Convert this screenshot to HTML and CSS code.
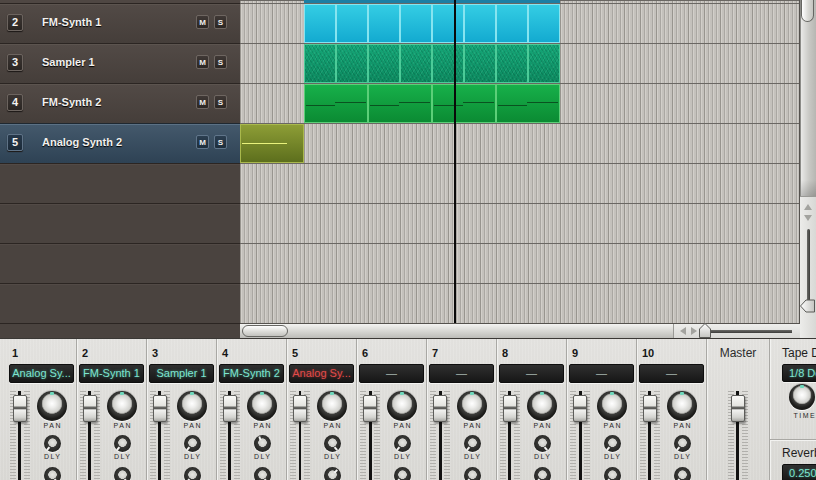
FILE: index.html
```html
<!DOCTYPE html>
<html lang="en">
  <head>
    <meta charset="UTF-8">
    <title>Song</title>
    <link rel="stylesheet" href="styles.css">
  </head>
  <body>
    <div class="arrange">
      <div class="tracks">
        <div class="track-stub"></div>
        <div class="track"><span class="num">2</span><span class="name">FM-Synth 1</span><span class="btn">M</span><span class="btn">S</span></div>
        <div class="track"><span class="num">3</span><span class="name">Sampler 1</span><span class="btn">M</span><span class="btn">S</span></div>
        <div class="track"><span class="num">4</span><span class="name">FM-Synth 2</span><span class="btn">M</span><span class="btn">S</span></div>
        <div class="track selected"><span class="num">5</span><span class="name">Analog Synth 2</span><span class="btn">M</span><span class="btn">S</span></div>
        <div class="track empty"></div>
        <div class="track empty"></div>
        <div class="track empty"></div>
        <div class="track empty"></div>
      </div>
      <div class="tracks-foot"></div>

      <div class="timeline">
        <div class="lane-stub"><div class="stub-clip"></div></div>
        <div class="lane offset">
          <div class="seg cyan"></div><div class="seg cyan"></div><div class="seg cyan"></div><div class="seg cyan"></div>
          <div class="seg cyan"></div><div class="seg cyan"></div><div class="seg cyan"></div><div class="seg cyan"></div>
        </div>
        <div class="lane offset">
          <div class="seg teal"></div><div class="seg teal"></div><div class="seg teal"></div><div class="seg teal"></div>
          <div class="seg teal"></div><div class="seg teal"></div><div class="seg teal"></div><div class="seg teal"></div>
        </div>
        <div class="lane offset">
          <div class="seg wide green"></div><div class="seg wide green"></div>
          <div class="seg wide green"></div><div class="seg wide green"></div>
        </div>
        <div class="lane">
          <div class="seg wide olive"></div>
        </div>
        <div class="lane"></div>
        <div class="lane"></div>
        <div class="lane"></div>
        <div class="lane"></div>
        <div class="playhead"></div>
      </div>

      <div class="hscroll">
        <div class="hs-track"><div class="hs-thumb"></div></div>
        <div class="hs-zoom">
          <span class="arr-left"></span>
          <span class="arr-right"></span>
          <div class="hz-slider">
            <svg class="hz-thumb" width="12" height="15" viewBox="0 0 12 15">
              <defs>
                <linearGradient id="tg" x1="0" y1="0" x2="0" y2="1">
                  <stop offset="0" stop-color="#ffffff"/>
                  <stop offset="1" stop-color="#c4c4c0"/>
                </linearGradient>
              </defs>
              <polygon points="6,0.5 11.5,6 11.5,14.5 0.5,14.5 0.5,6" fill="url(#tg)" stroke="#5a5a57"/>
            </svg>
          </div>
        </div>
      </div>

      <div class="vscroll">
        <div class="vs-track"><div class="vs-thumb"></div></div>
        <div class="vs-zoom">
          <span class="arr-up"></span>
          <span class="arr-down"></span>
          <div class="vz-track"></div>
          <svg class="vz-thumb" width="15" height="14" viewBox="0 0 15 14">
            <defs>
              <linearGradient id="vg" x1="0" y1="0" x2="1" y2="0">
                <stop offset="0" stop-color="#ffffff"/>
                <stop offset="1" stop-color="#c4c4c0"/>
              </linearGradient>
            </defs>
            <polygon points="0.5,7 6,1 14.5,1 14.5,13 6,13" fill="url(#vg)" stroke="#5a5a57"/>
          </svg>
        </div>
      </div>
    </div>

    <div class="mixer">
      <div class="strip">
        <div class="ch-num">1</div>
        <div class="display">Analog Sy...</div>
        <div class="controls">
          <div class="fader"><div class="fader-cap"></div></div>
          <div class="knobs">
            <div class="knob"></div><div class="knob-label">PAN</div>
            <div class="knob-sm" style="--a:-140deg"></div><div class="knob-label">DLY</div>
            <div class="knob-sm" style="--a:140deg"></div>
          </div>
        </div>
      </div>
      <div class="strip">
        <div class="ch-num">2</div>
        <div class="display">FM-Synth 1</div>
        <div class="controls">
          <div class="fader"><div class="fader-cap"></div></div>
          <div class="knobs">
            <div class="knob"></div><div class="knob-label">PAN</div>
            <div class="knob-sm" style="--a:-140deg"></div><div class="knob-label">DLY</div>
            <div class="knob-sm" style="--a:140deg"></div>
          </div>
        </div>
      </div>
      <div class="strip">
        <div class="ch-num">3</div>
        <div class="display">Sampler 1</div>
        <div class="controls">
          <div class="fader"><div class="fader-cap"></div></div>
          <div class="knobs">
            <div class="knob"></div><div class="knob-label">PAN</div>
            <div class="knob-sm" style="--a:-140deg"></div><div class="knob-label">DLY</div>
            <div class="knob-sm" style="--a:-140deg"></div>
          </div>
        </div>
      </div>
      <div class="strip">
        <div class="ch-num">4</div>
        <div class="display">FM-Synth 2</div>
        <div class="controls">
          <div class="fader"><div class="fader-cap"></div></div>
          <div class="knobs">
            <div class="knob"></div><div class="knob-label">PAN</div>
            <div class="knob-sm" style="--a:-20deg"></div><div class="knob-label">DLY</div>
            <div class="knob-sm" style="--a:140deg"></div>
          </div>
        </div>
      </div>
      <div class="strip">
        <div class="ch-num">5</div>
        <div class="display red">Analog Sy...</div>
        <div class="controls">
          <div class="fader"><div class="fader-cap"></div></div>
          <div class="knobs">
            <div class="knob"></div><div class="knob-label">PAN</div>
            <div class="knob-sm" style="--a:140deg"></div><div class="knob-label">DLY</div>
            <div class="knob-sm" style="--a:40deg"></div>
          </div>
        </div>
      </div>
      <div class="strip">
        <div class="ch-num">6</div>
        <div class="display empty">—</div>
        <div class="controls">
          <div class="fader"><div class="fader-cap"></div></div>
          <div class="knobs">
            <div class="knob"></div><div class="knob-label">PAN</div>
            <div class="knob-sm" style="--a:-140deg"></div><div class="knob-label">DLY</div>
            <div class="knob-sm" style="--a:-140deg"></div>
          </div>
        </div>
      </div>
      <div class="strip">
        <div class="ch-num">7</div>
        <div class="display empty">—</div>
        <div class="controls">
          <div class="fader"><div class="fader-cap"></div></div>
          <div class="knobs">
            <div class="knob"></div><div class="knob-label">PAN</div>
            <div class="knob-sm" style="--a:-140deg"></div><div class="knob-label">DLY</div>
            <div class="knob-sm" style="--a:-140deg"></div>
          </div>
        </div>
      </div>
      <div class="strip">
        <div class="ch-num">8</div>
        <div class="display empty">—</div>
        <div class="controls">
          <div class="fader"><div class="fader-cap"></div></div>
          <div class="knobs">
            <div class="knob"></div><div class="knob-label">PAN</div>
            <div class="knob-sm" style="--a:140deg"></div><div class="knob-label">DLY</div>
            <div class="knob-sm" style="--a:-140deg"></div>
          </div>
        </div>
      </div>
      <div class="strip">
        <div class="ch-num">9</div>
        <div class="display empty">—</div>
        <div class="controls">
          <div class="fader"><div class="fader-cap"></div></div>
          <div class="knobs">
            <div class="knob"></div><div class="knob-label">PAN</div>
            <div class="knob-sm" style="--a:-140deg"></div><div class="knob-label">DLY</div>
            <div class="knob-sm" style="--a:-140deg"></div>
          </div>
        </div>
      </div>
      <div class="strip">
        <div class="ch-num">10</div>
        <div class="display empty">—</div>
        <div class="controls">
          <div class="fader"><div class="fader-cap"></div></div>
          <div class="knobs">
            <div class="knob"></div><div class="knob-label">PAN</div>
            <div class="knob-sm" style="--a:-140deg"></div><div class="knob-label">DLY</div>
            <div class="knob-sm" style="--a:-140deg"></div>
          </div>
        </div>
      </div>
      <div class="strip master">
        <div class="master-label">Master</div>
        <div class="fader"><div class="fader-cap"></div></div>
      </div>
      <div class="fx">
        <div class="fx-tape">
          <div class="fx-title">Tape Delay</div>
          <div class="display fx-display">1/8 Dotted</div>
          <div class="knob fx-knob"></div>
          <div class="knob-label fx-label">TIME</div>
        </div>
        <div class="fx-reverb">
          <div class="fx-title">Reverb</div>
          <div class="display fx-display">0.250</div>
        </div>
      </div>
    </div>
  </body>
</html>
```

FILE: styles.css
```css
      html, body {
        margin: 0;
        padding: 0;
      }
      body {
        width: 816px;
        height: 480px;
        overflow: hidden;
        font-family: "Liberation Sans", Arial, sans-serif;
        background-color: #dcdbd7;
      }
      .arrange {
        display: grid;
        grid-template-columns: 240px 560px 16px;
        grid-template-rows: 323px 15px;
        height: 338px;
      }
/* track list */
      .tracks {
        grid-column: 1;
        grid-row: 1;
        display: flex;
        flex-direction: column;
        background-color: #4a433f;
      }
      .track-stub {
        height: 3px;
        flex: none;
        background-color: #4f4743;
      }
      .track {
        height: 40px;
        flex: none;
        box-sizing: border-box;
        display: flex;
        align-items: center;
        padding: 0 13px 3px 7px;
        border-top: 1px solid #2b2522;
        box-shadow: inset 0 1px 0 #5c544f;
        background: linear-gradient(#524a46, #453e3a);
      }
      .track.empty {
        background: #4a433f;
        box-shadow: inset 0 1px 0 #524a46;
      }
      .track.selected {
        border-top-color: #1f2830;
        box-shadow: inset 0 1px 0 #5b7185;
        background: linear-gradient(#44596c, #2e4254);
      }
      .num {
        width: 16px;
        height: 17px;
        box-sizing: border-box;
        display: flex;
        align-items: center;
        justify-content: center;
        border: 1px solid #6c645f;
        border-radius: 2px;
        background: linear-gradient(#3b3532, #2a2522);
        box-shadow: 0 1px 1px #1c1816;
        color: #f4f2f0;
        font-size: 11px;
        font-weight: bold;
      }
      .selected .num {
        border-color: #5f7387;
        background: linear-gradient(#26384a, #1b2a38);
      }
      .name {
        flex: 1;
        margin-left: 19px;
        color: #f2f0ee;
        font-size: 11px;
        font-weight: bold;
        text-shadow: 0 1px 1px #000;
        white-space: nowrap;
      }
      .btn {
        width: 13px;
        height: 14px;
        margin-left: 5px;
        box-sizing: border-box;
        display: flex;
        align-items: center;
        justify-content: center;
        border: 1px solid #6e6661;
        border-radius: 2px;
        background: linear-gradient(#3f3835, #2c2724);
        color: #f0eeec;
        font-size: 8px;
        font-weight: bold;
      }
      .selected .btn {
        border-color: #60758a;
        background: linear-gradient(#2b3e50, #1e2e3c);
      }
      .tracks-foot {
        grid-column: 1;
        grid-row: 2;
        background-color: #4a433f;
        border-top: 1px solid #2b2522;
      }
/* arrangement grid */
      .timeline {
        grid-column: 2;
        grid-row: 1;
        position: relative;
        overflow: hidden;
        box-sizing: border-box;
        border-right: 1px solid #55524e;
        display: flex;
        flex-direction: column;
        background-color: #c4c1bc;
        background-image:
          repeating-linear-gradient(to bottom, #6a6763 0 1px, transparent 1px 40px),
          repeating-linear-gradient(to right, #98958f 0 1px, transparent 1px 16px),
          repeating-linear-gradient(to right, #aaa7a2 0 1px, #d2cfca 1px 2px, transparent 2px 4px);
        background-position: 0 3px, 0 0, 0 0;
      }
      .lane-stub {
        height: 3px;
        flex: none;
        padding-left: 64px;
        display: flex;
      }
      .stub-clip {
        width: 256px;
        background-color: #1c7fa4;
      }
      .lane {
        height: 40px;
        flex: none;
        box-sizing: border-box;
        padding-top: 1px;
        display: flex;
      }
      .lane.offset {
        padding-left: 64px;
      }
      .seg {
        flex: none;
        width: 32px;
        box-sizing: border-box;
        border: 1px solid;
        position: relative;
      }
      .seg.wide {
        width: 64px;
      }
      .cyan {
        border-color: #86e4f0;
        background: linear-gradient(#34cde4, #13aad0);
      }
      .teal {
        border-color: #4ccb98;
        background:
          repeating-linear-gradient(60deg, rgba(0, 60, 40, 0.18) 0 1px, transparent 1px 3px),
          repeating-linear-gradient(-60deg, rgba(120, 230, 190, 0.12) 0 1px, transparent 1px 4px),
          linear-gradient(#15a677, #0c895f);
      }
      .green {
        border-color: #5ccf78;
        background: linear-gradient(#17b04a, #0b8b33);
      }
      .green::before,
      .green::after {
        content: "";
        position: absolute;
        height: 1px;
        background-color: #0a5220;
      }
      .green::before {
        left: 1px;
        width: 29px;
        top: 20px;
      }
      .green::after {
        left: 30px;
        width: 31px;
        top: 17px;
      }
      .olive {
        border-color: #a9b84c;
        background: linear-gradient(#8d9d36, #5d6f1d);
      }
      .olive::before {
        content: "";
        position: absolute;
        left: 1px;
        top: 18px;
        width: 45px;
        height: 1px;
        background-color: #e9f27c;
      }
      .playhead {
        position: absolute;
        left: 214px;
        top: 0;
        bottom: 0;
        width: 2px;
        background-color: #0a0a0a;
      }
/* horizontal scrollbar */
      .hscroll {
        grid-column: 2;
        grid-row: 2;
        display: flex;
        border-top: 1px solid #55524e;
      }
      .hs-track {
        flex: 1;
        background: linear-gradient(#f3f3f1, #d2d2ce 60%, #bcbcb8);
      }
      .hs-thumb {
        width: 46px;
        height: 12px;
        margin: 1px 0 0 2px;
        box-sizing: border-box;
        border: 1px solid #676763;
        border-radius: 7px;
        background: linear-gradient(#ffffff, #dcdcd8 55%, #c2c2be);
      }
      .hs-zoom {
        width: 127px;
        display: flex;
        align-items: center;
        box-sizing: border-box;
        padding-left: 6px;
        border-left: 1px solid #9a9a96;
        background: linear-gradient(#eeeeec, #d8d8d5);
      }
      .arr-left,
      .arr-right {
        width: 0;
        height: 0;
        border-top: 4px solid transparent;
        border-bottom: 4px solid transparent;
      }
      .arr-left {
        border-right: 6px solid #a3a39f;
      }
      .arr-right {
        margin-left: 5px;
        border-left: 6px solid #a3a39f;
      }
      .hz-slider {
        flex: 1;
        height: 15px;
        margin: 0 7px 0 2px;
        display: flex;
        align-items: center;
        background: linear-gradient(#6a6a67, #3c3c3a) no-repeat 6px 6px / 87px 3px;
      }
      .hz-thumb {
        display: block;
        margin-top: -1px;
      }
/* vertical scrollbar */
      .vscroll {
        grid-column: 3;
        grid-row: 1 / 3;
        display: flex;
        flex-direction: column;
      }
      .vs-track {
        height: 196px;
        flex: none;
        box-sizing: border-box;
        border-left: 1px solid #8c8c88;
        background:
          linear-gradient(transparent 180px, rgba(0, 0, 0, 0.18) 196px),
          linear-gradient(to right, #e9e9e7, #c8c8c4 55%, #b6b6b2);
      }
      .vs-thumb {
        width: 13px;
        height: 22px;
        box-sizing: border-box;
        border: 1px solid #666662;
        border-top: none;
        border-radius: 0 0 7px 7px;
        background: linear-gradient(to right, #ffffff, #dadad6 55%, #c4c4c0);
      }
      .vs-zoom {
        flex: 1;
        display: flex;
        flex-direction: column;
        align-items: center;
        box-sizing: border-box;
        padding-top: 7px;
        border-top: 1px solid #9a9a96;
        background: linear-gradient(to right, #ececea, #d8d8d5);
      }
      .arr-up,
      .arr-down {
        width: 0;
        height: 0;
        flex: none;
        border-left: 4px solid transparent;
        border-right: 4px solid transparent;
      }
      .arr-up {
        border-bottom: 6px solid #a3a39f;
      }
      .arr-down {
        margin-top: 5px;
        border-top: 6px solid #a3a39f;
      }
      .vz-track {
        width: 3px;
        height: 80px;
        flex: none;
        margin-top: 8px;
        border-radius: 2px;
        background: linear-gradient(to right, #6a6a67, #3c3c3a);
      }
      .vz-thumb {
        display: block;
        flex: none;
        margin-top: -10px;
        margin-left: -1px;
      }
/* mixer */
      .mixer {
        display: flex;
        height: 142px;
        box-sizing: border-box;
        padding-left: 7px;
        border-top: 1px solid #3a3835;
        overflow: hidden;
        background:
          repeating-linear-gradient(90deg, rgba(255, 255, 255, 0.12) 0 1px, transparent 1px 3px),
          linear-gradient(#e2e1de, #d8d7d3);
      }
      .strip {
        width: 70px;
        flex: none;
        box-sizing: border-box;
        padding: 8px 2px 0 2px;
        border-right: 1px solid #a9a8a4;
        box-shadow: 1px 0 0 #f2f2f0;
        display: flex;
        flex-direction: column;
        overflow: hidden;
      }
      .strip > *,
      .fx-tape > *,
      .fx-reverb > *,
      .knobs > * {
        flex: none;
      }
      .ch-num {
        padding-left: 3px;
        font-size: 11px;
        line-height: 13px;
        font-weight: bold;
        color: #161616;
      }
      .display {
        height: 19px;
        margin-top: 4px;
        box-sizing: border-box;
        border: 1px solid #0e0e0e;
        border-radius: 2px;
        background: linear-gradient(#303030, #161616);
        box-shadow: 0 1px 0 #f4f4f2;
        color: #7de4d0;
        font-size: 11px;
        line-height: 17px;
        text-align: center;
        white-space: nowrap;
        overflow: hidden;
        text-shadow: 0 0 3px rgba(90, 220, 190, 0.55);
      }
      .display.red {
        color: #e24c4a;
        text-shadow: 0 0 3px rgba(220, 60, 60, 0.55);
      }
      .display.empty {
        color: #a9b9b2;
        text-shadow: none;
      }
      .controls {
        display: flex;
        margin-top: 8px;
      }
      .fader {
        width: 20px;
        height: 100px;
        margin-left: 1px;
        flex: none;
        display: flex;
        justify-content: center;
        align-items: flex-start;
        background:
          linear-gradient(to right, transparent 8.5px, #121212 8.5px 11.5px, transparent 11.5px),
          linear-gradient(to right, transparent 6px, #dcdbd7 6px 14px, transparent 14px),
          repeating-linear-gradient(to bottom, #b1b0ac 0 1px, transparent 1px 3px);
      }
      .fader-cap {
        width: 14px;
        height: 27px;
        flex: none;
        margin-top: 4px;
        box-sizing: border-box;
        border: 1px solid #5c5c59;
        border-radius: 2px;
        background: linear-gradient(#fafaf8 0, #e3e3df 40%, #6a6a67 44%, #5a5a57 50%, #f2f2f0 56%, #d4d4d0 85%, #a8a8a4 100%);
        box-shadow: 1px 2px 2px rgba(0, 0, 0, 0.35);
      }
      .knobs {
        flex: 1;
        display: flex;
        flex-direction: column;
        align-items: center;
      }
      .knob {
        width: 30px;
        height: 30px;
        border-radius: 50%;
        position: relative;
        background: radial-gradient(circle at 50% 42%, #ffffff 0, #eeeeec 4px, #cfcfcb 9px, #8e8e8a 10px, #3e3e3c 10.5px, #2c2c2a 13px, #1c1c1a 15px);
        box-shadow: 0 1px 1px rgba(255, 255, 255, 0.9), 0 -1px 1px rgba(0, 0, 0, 0.15);
      }
      .knob::after {
        content: "";
        position: absolute;
        top: 1px;
        left: 13px;
        width: 4px;
        height: 3px;
        border-radius: 1px;
        background-color: #6ed7bb;
      }
      .knob-label {
        margin-top: 1px;
        font-size: 7px;
        line-height: 8px;
        letter-spacing: 1.5px;
        padding-left: 1.5px;
        color: #2a2a2a;
      }
      .knob-sm {
        width: 17px;
        height: 17px;
        margin-top: 5px;
        border-radius: 50%;
        position: relative;
        background: radial-gradient(circle at 50% 45%, #e6e6e2 0, #cfcfcb 4px, #3a3a38 4.5px, #262624 8.5px);
        box-shadow: 0 1px 1px rgba(255, 255, 255, 0.9);
      }
      .knob-sm + .knob-label + .knob-sm {
        margin-top: 6px;
      }
      .knob-sm::after {
        content: "";
        position: absolute;
        left: 50%;
        top: 50%;
        width: 2px;
        height: 4px;
        background-color: #f4f4f2;
        transform: translate(-50%, -50%) rotate(var(--a)) translateY(-6px);
      }
/* master and effects */
      .strip.master {
        width: 63px;
        align-items: center;
        padding: 8px 0 0 0;
      }
      .master-label {
        font-size: 12px;
        line-height: 13px;
        color: #2c2c2c;
        margin-bottom: 31px;
      }
      .master .fader {
        margin-left: 0;
      }
      .fx {
        flex: none;
        width: 70px;
        display: flex;
        flex-direction: column;
      }
      .fx-tape {
        height: 101px;
        flex: none;
        box-sizing: border-box;
        padding: 8px 0 0 12px;
        border-bottom: 1px solid #a9a8a4;
        box-shadow: 0 1px 0 #f2f2f0;
      }
      .fx-reverb {
        padding: 7px 0 0 12px;
      }
      .fx-title {
        font-size: 12px;
        line-height: 13px;
        color: #1e1e1e;
        white-space: nowrap;
      }
      .fx-display {
        width: 62px;
        height: 18px;
        margin-top: 4px;
        padding-left: 6px;
        text-align: left;
        line-height: 16px;
      }
      .fx-knob {
        width: 26px;
        height: 26px;
        margin: 2px 0 0 7px;
        background: radial-gradient(circle at 50% 42%, #ffffff 0, #eeeeec 4px, #cfcfcb 8px, #8e8e8a 9px, #3e3e3c 9.5px, #2c2c2a 11px, #1c1c1a 13px);
      }
      .fx-knob::after {
        left: 11px;
      }
      .fx-label {
        margin: 2px 0 0 10px;
      }
```
